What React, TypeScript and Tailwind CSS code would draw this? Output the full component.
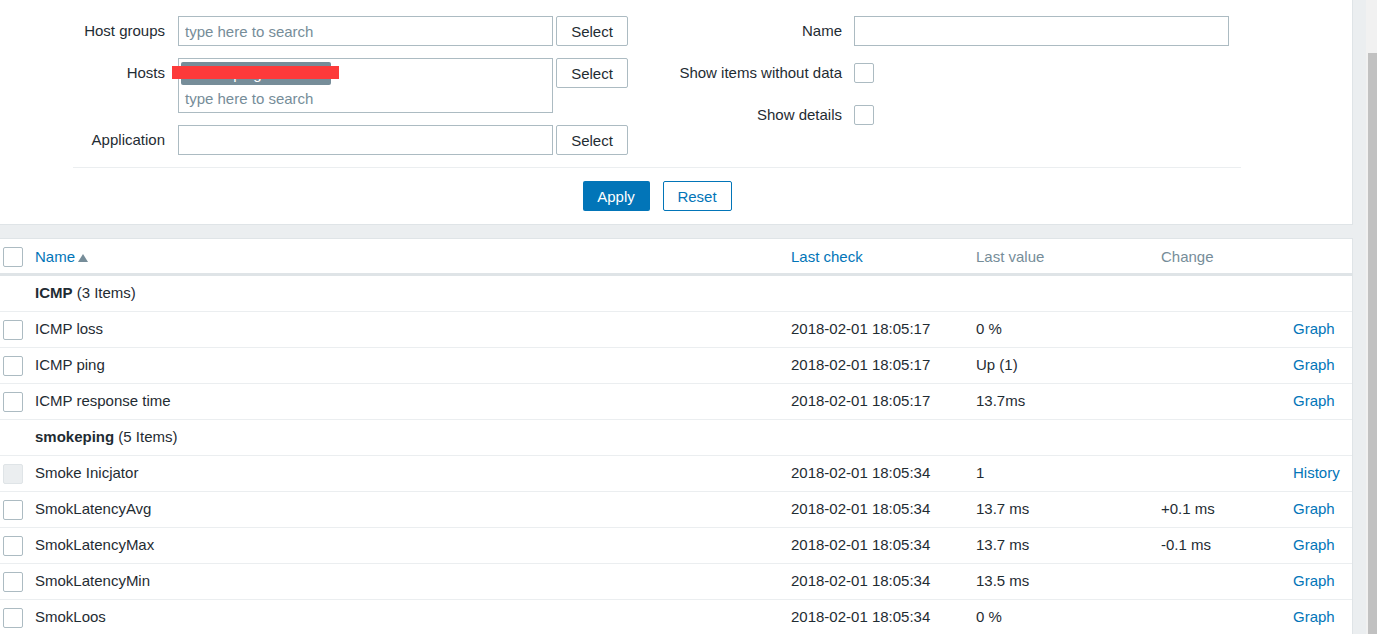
import React from "react";

const FONT = "font-['Liberation_Sans',Arial,sans-serif]";

function Checkbox({ disabled = false }: { disabled?: boolean }) {
  return (
    <div
      className={
        disabled
          ? "w-[20px] h-[20px] rounded-[2px] border border-[#dfe4e7] bg-[#ebeef0]"
          : "w-[20px] h-[20px] rounded-[2px] border border-[#acbbc2] bg-white"
      }
    />
  );
}

function SelectBtn() {
  return (
    <button className="ml-[3px] w-[72px] h-[30px] rounded-[2px] border border-[#acbbc2] bg-white text-[#1f2c33] text-[15px] leading-none">
      Select
    </button>
  );
}

type Row =
  | { group: string; count: string }
  | {
      name: string;
      check: string;
      value: string;
      change?: string;
      link: string;
      disabled?: boolean;
    };

const rows: Row[] = [
  { group: "ICMP", count: "(3 Items)" },
  { name: "ICMP loss", check: "2018-02-01 18:05:17", value: "0 %", link: "Graph" },
  { name: "ICMP ping", check: "2018-02-01 18:05:17", value: "Up (1)", link: "Graph" },
  { name: "ICMP response time", check: "2018-02-01 18:05:17", value: "13.7ms", link: "Graph" },
  { group: "smokeping", count: "(5 Items)" },
  { name: "Smoke Inicjator", check: "2018-02-01 18:05:34", value: "1", link: "History", disabled: true },
  { name: "SmokLatencyAvg", check: "2018-02-01 18:05:34", value: "13.7 ms", change: "+0.1 ms", link: "Graph" },
  { name: "SmokLatencyMax", check: "2018-02-01 18:05:34", value: "13.7 ms", change: "-0.1 ms", link: "Graph" },
  { name: "SmokLatencyMin", check: "2018-02-01 18:05:34", value: "13.5 ms", link: "Graph" },
  { name: "SmokLoos", check: "2018-02-01 18:05:34", value: "0 %", link: "Graph" },
];

const GRID = "grid grid-cols-[35px_756px_185px_185px_132px_1fr] items-center";

export default function App() {
  return (
    <div className={`${FONT} text-[15px] text-[#1f2c33] h-[634px] w-full flex overflow-hidden bg-[#ebeef0]`}>
      <div className="flex-1 flex flex-col min-w-0 overflow-hidden">
        {/* Filter panel */}
        <div className="shrink-0 w-[1353px] bg-white border-r border-b border-[#dfe4e7] pt-[16px] pb-[13px]">
          <div className="flex">
            {/* left column */}
            <div className="flex flex-col gap-[12px]">
              <div className="flex items-start">
                <div className="w-[165px] text-right h-[30px] leading-[30px]">Host groups</div>
                <input
                  className="ml-[13px] w-[375px] h-[30px] border border-[#acbbc2] px-[6px] outline-none text-[15px] placeholder:text-[#768d99]"
                  placeholder="type here to search"
                />
                <SelectBtn />
              </div>
              <div className="flex items-start">
                <div className="w-[165px] text-right h-[30px] leading-[30px]">Hosts</div>
                <div className="relative ml-[13px] w-[375px] h-[55px] border border-[#acbbc2] flex flex-col pt-[3px] px-[2px]">
                  <div className="w-[150px] h-[23px] rounded-[2px] bg-[#768d99] text-white text-[15px] leading-[23px] pl-[8px] overflow-hidden">
                    smokeping
                  </div>
                  <div className="pl-[4px] mt-[4px] leading-[20px] text-[#768d99]">type here to search</div>
                  <div className="absolute left-[-7px] top-[7px] w-[167px] h-[13px] bg-[#fd3a3a]" />
                </div>
                <SelectBtn />
              </div>
              <div className="flex items-start">
                <div className="w-[165px] text-right h-[30px] leading-[30px]">Application</div>
                <input className="ml-[13px] w-[375px] h-[30px] border border-[#acbbc2] px-[6px] outline-none" />
                <SelectBtn />
              </div>
            </div>
            {/* right column */}
            <div className="flex flex-col gap-[12px]">
              <div className="flex items-center h-[30px]">
                <div className="w-[214px] text-right">Name</div>
                <input className="ml-[12px] w-[375px] h-[30px] border border-[#acbbc2] px-[6px] outline-none" />
              </div>
              <div className="flex items-center h-[30px]">
                <div className="w-[214px] text-right">Show items without data</div>
                <div className="ml-[12px]">
                  <Checkbox />
                </div>
              </div>
              <div className="flex items-center h-[30px]">
                <div className="w-[214px] text-right">Show details</div>
                <div className="ml-[12px]">
                  <Checkbox />
                </div>
              </div>
            </div>
          </div>
          <div className="ml-[73px] w-[1168px] mt-[12px] border-t border-[#ebeef0] pt-[13px] flex justify-center gap-[13px]">
            <button className="w-[67px] h-[30px] rounded-[2px] bg-[#0275b8] text-white text-[15px] leading-none">
              Apply
            </button>
            <button className="w-[69px] h-[30px] rounded-[2px] border border-[#0275b8] bg-white text-[#0275b8] text-[15px] leading-none">
              Reset
            </button>
          </div>
        </div>

        {/* Table panel */}
        <div className="shrink-0 mt-[13px] w-[1353px] bg-white border-t border-r border-[#dfe4e7]">
          <div className={`${GRID} h-[37px] border-b-[3px] border-[#dfe4e7]`}>
            <div className="pl-[3px] pt-[2px]">
              <Checkbox />
            </div>
            <div className="flex items-center text-[#0275b8] pt-[2px]">
              Name
              <svg width="10" height="8" viewBox="0 0 10 8" className="ml-[3px] mt-[2px]">
                <path d="M5 0 L10 8 L0 8 Z" fill="#768d99" />
              </svg>
            </div>
            <div className="text-[#0275b8] pt-[2px]">Last check</div>
            <div className="text-[#768d99] pt-[2px]">Last value</div>
            <div className="text-[#768d99] pt-[2px]">Change</div>
            <div />
          </div>
          {rows.map((r, i) =>
            "group" in r ? (
              <div key={i} className={`${GRID} h-[36px] border-b border-[#ebeef0]`}>
                <div />
                <div>
                  <span className="font-bold">{r.group}</span> {r.count}
                </div>
              </div>
            ) : (
              <div key={i} className={`${GRID} h-[36px] border-b border-[#ebeef0]`}>
                <div className="pl-[3px]">
                  <Checkbox disabled={r.disabled} />
                </div>
                <div>{r.name}</div>
                <div>{r.check}</div>
                <div>{r.value}</div>
                <div>{r.change ?? ""}</div>
                <div className="text-[#0275b8]">{r.link}</div>
              </div>
            )
          )}
        </div>
      </div>
      {/* scrollbar */}
      <div className="w-[11px] flex flex-col bg-[#f1f1f1]">
        <div className="h-[53px]" />
        <div className="flex-1 ml-[2px] bg-[#c1c1c1]" />
      </div>
    </div>
  );
}
